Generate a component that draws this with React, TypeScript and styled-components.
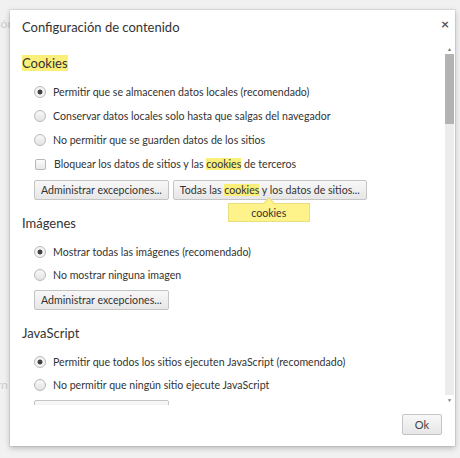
import styled, { createGlobalStyle } from "styled-components";

const GlobalStyle = createGlobalStyle`
  body {
    margin: 0;
    background: #f1f1f1;
    font-family: Lato, "Noto Sans", Arial, sans-serif;
  }
`;

const cookieOptions = [
  { label: "Permitir que se almacenen datos locales (recomendado)", checked: true },
  { label: "Conservar datos locales solo hasta que salgas del navegador" },
  { label: "No permitir que se guarden datos de los sitios" },
];

const imageOptions = [
  { label: "Mostrar todas las imágenes (recomendado)", checked: true },
  { label: "No mostrar ninguna imagen" },
];

const jsOptions = [
  { label: "Permitir que todos los sitios ejecuten JavaScript (recomendado)", checked: true },
  { label: "No permitir que ningún sitio ejecute JavaScript" },
];

const backdropLines = ["ación", "", "y", "id", "", "do", "", "", "", "", "", "io", "", "cr", "", "", "", "", "", "tern"];

const App = () => {
  return (
    <Page>
      <GlobalStyle />
      <Backdrop>
        {backdropLines.map((t, i) => (
          <BackdropLine key={i}>{t}</BackdropLine>
        ))}
      </Backdrop>
      <Dialog>
        <Header>
          <Title>Configuración de contenido</Title>
          <Close>×</Close>
        </Header>
        <Body>
          <Scroll>
            <Section>
              <Heading>
                <Mark>Cookies</Mark>
              </Heading>
              <Options>
                {cookieOptions.map((o) => (
                  <Option key={o.label}>
                    <Radio checked={!!o.checked} />
                    <span>{o.label}</span>
                  </Option>
                ))}
                <Option>
                  <Checkbox />
                  <span>
                    Bloquear los datos de sitios y las <Mark>cookies</Mark> de terceros
                  </span>
                </Option>
              </Options>
              <Buttons>
                <Button>Administrar excepciones...</Button>
                <TooltipWrap>
                  <Button>
                    Todas las <Mark>cookies</Mark> y los datos de sitios...
                  </Button>
                  <Tooltip>cookies</Tooltip>
                </TooltipWrap>
              </Buttons>
            </Section>
            <Section>
              <Heading>Imágenes</Heading>
              <Options>
                {imageOptions.map((o) => (
                  <Option key={o.label} compact>
                    <Radio checked={!!o.checked} />
                    <span>{o.label}</span>
                  </Option>
                ))}
              </Options>
              <Buttons>
                <Button>Administrar excepciones...</Button>
              </Buttons>
            </Section>
            <Section>
              <Heading>JavaScript</Heading>
              <Options>
                {jsOptions.map((o) => (
                  <Option key={o.label} compact>
                    <Radio checked={!!o.checked} />
                    <span>{o.label}</span>
                  </Option>
                ))}
              </Options>
              <Buttons>
                <Button>Administrar excepciones...</Button>
              </Buttons>
            </Section>
          </Scroll>
          <ScrollBar>
            <Arrow>▲</Arrow>
            <Track>
              <Thumb />
            </Track>
            <Arrow>▼</Arrow>
          </ScrollBar>
        </Body>
        <Footer>
          <OkButton>Ok</OkButton>
        </Footer>
      </Dialog>
    </Page>
  );
};

export default App;

const Page = styled.div`
  position: relative;
  width: 460px;
  height: 458px;
  overflow: hidden;
  background: #f1f1f1;
`;

const Backdrop = styled.div`
  display: flex;
  flex-direction: column;
  padding: 14px 0 0 0;
  margin-left: -14px;
  color: #cdcdcd;
  font-size: 12px;
`;

const BackdropLine = styled.div`
  height: 19px;
  line-height: 19px;
`;

const Dialog = styled.div`
  position: absolute;
  left: 10px;
  top: 10px;
  width: 445px;
  height: 436px;
  background: #fff;
  box-shadow: 0 2px 6px rgba(0, 0, 0, 0.25), 0 0 0 1px rgba(0, 0, 0, 0.06);
  display: flex;
  flex-direction: column;
  color: #333;
`;

const Header = styled.div`
  display: flex;
  justify-content: space-between;
  align-items: flex-start;
  padding: 7px 6px 0 12px;
  height: 34px;
  box-sizing: border-box;
`;

const Title = styled.div`
  font-size: 13px;
  color: #333;
  padding-top: 2px;
`;

const Close = styled.div`
  font-size: 14px;
  color: #555;
  line-height: 14px;
  font-weight: bold;
`;

const Body = styled.div`
  flex: 1;
  display: flex;
  min-height: 0;
`;

const Scroll = styled.div`
  flex: 1;
  overflow: hidden;
  padding: 9px 0 0 12px;
`;

const Section = styled.div`
  margin-bottom: 13px;
`;

const Heading = styled.div`
  font-size: 13px;
  color: #333;
  height: 20px;
  line-height: 20px;
  margin-bottom: 7px;
`;

const Mark = styled.span`
  background: #fbef7a;
`;

const Options = styled.div`
  display: flex;
  flex-direction: column;
  padding-left: 12px;
`;

const Option = styled.div<{ compact?: boolean }>`
  display: flex;
  align-items: center;
  gap: 7px;
  height: ${(p) => (p.compact ? "23px" : "24px")};
  font-size: 10.6px;
  color: #333;
  white-space: nowrap;
`;

const Radio = styled.span<{ checked: boolean }>`
  width: 10px;
  height: 10px;
  border-radius: 50%;
  border: 1px solid #b8b8b8;
  background: ${(p) =>
    p.checked
      ? "radial-gradient(circle, #444 0 2.2px, #f4f4f4 2.8px)"
      : "linear-gradient(#f8f8f8, #e4e4e4)"};
  flex-shrink: 0;
`;

const Checkbox = styled.span`
  width: 9px;
  height: 9px;
  border: 1px solid #b8b8b8;
  border-radius: 2px;
  background: linear-gradient(#fbfbfb, #e8e8e8);
  margin: 0 1px;
  flex-shrink: 0;
`;

const Buttons = styled.div`
  display: flex;
  gap: 4px;
  padding-left: 12px;
  margin-top: 4px;
`;

const Button = styled.div`
  height: 20px;
  line-height: 19px;
  padding: 0 6px;
  box-sizing: border-box;
  border: 1px solid #c4c4c4;
  border-radius: 2px;
  background: linear-gradient(#f8f8f8, #e6e6e6);
  font-size: 10.6px;
  color: #333;
  white-space: nowrap;
`;

const TooltipWrap = styled.div`
  position: relative;
`;

const Tooltip = styled.div`
  position: absolute;
  left: 55px;
  top: 23px;
  width: 82px;
  height: 19px;
  line-height: 18px;
  box-sizing: border-box;
  text-align: center;
  font-size: 10.6px;
  color: #333;
  background: #fdf38a;
  border: 1px solid #e9de80;
  &::before {
    content: "";
    position: absolute;
    left: 36px;
    top: -5px;
    width: 7px;
    height: 7px;
    background: #fdf38a;
    border-left: 1px solid #e9de80;
    border-top: 1px solid #e9de80;
    transform: rotate(45deg);
  }
`;

const ScrollBar = styled.div`
  width: 11px;
  display: flex;
  flex-direction: column;
  align-items: center;
`;

const Arrow = styled.div`
  font-size: 5px;
  color: #777;
  height: 10px;
  line-height: 10px;
`;

const Track = styled.div`
  flex: 1;
  width: 9px;
  background: #ececec;
`;

const Thumb = styled.div`
  width: 9px;
  height: 70px;
  background: #b3b3b3;
`;

const Footer = styled.div`
  display: flex;
  justify-content: flex-end;
  padding: 9px 13px 9px 0;
  height: 41px;
  box-sizing: border-box;
`;

const OkButton = styled.div`
  width: 40px;
  height: 21px;
  line-height: 20px;
  box-sizing: border-box;
  text-align: center;
  border: 1px solid #c4c4c4;
  border-radius: 2px;
  background: linear-gradient(#f8f8f8, #e6e6e6);
  font-size: 11px;
  color: #444;
`;
